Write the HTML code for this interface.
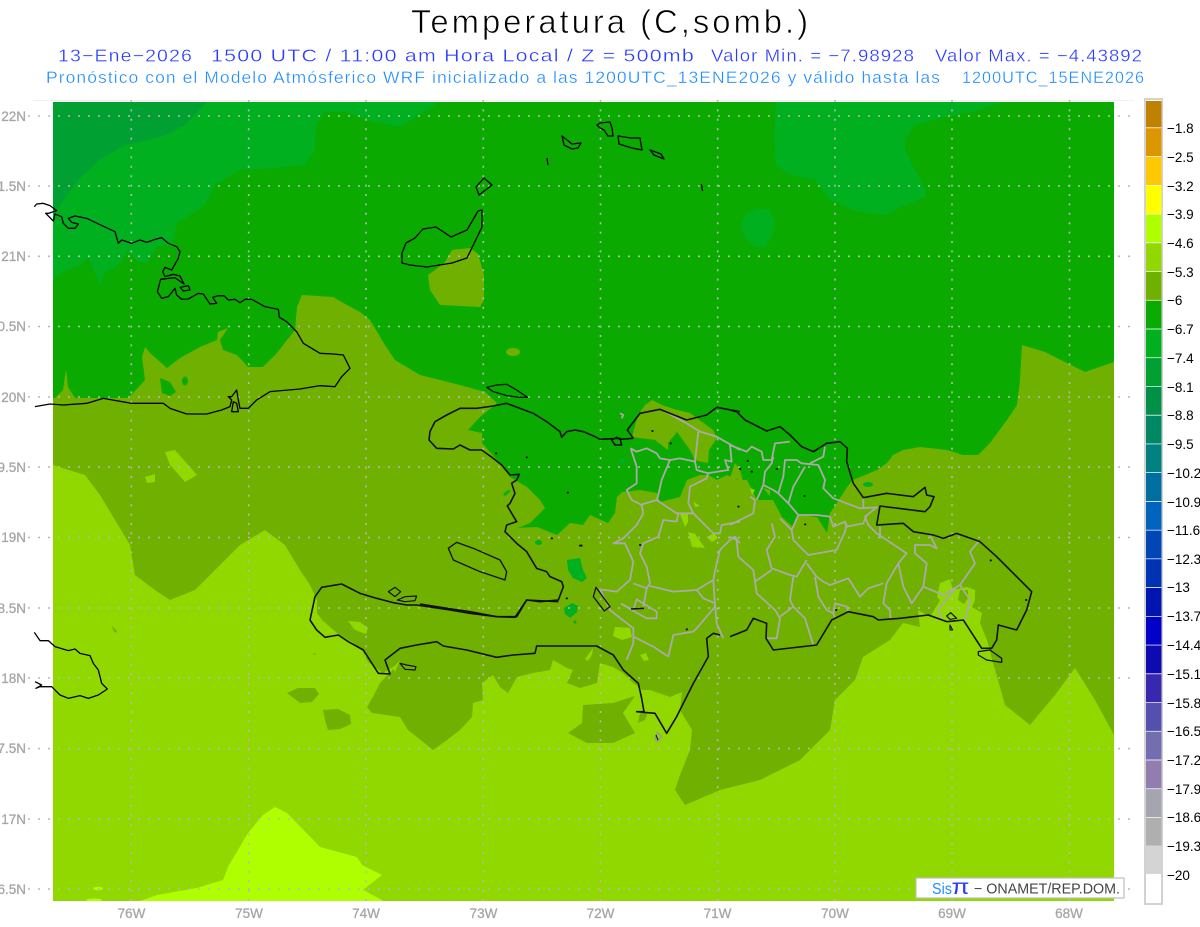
<!DOCTYPE html>
<html>
<head>
<meta charset="utf-8">
<title>Temperatura (C,somb.)</title>
<style>
html,body{margin:0;padding:0;background:#fff;width:1200px;height:927px;overflow:hidden}
svg{display:block}
svg path{vector-effect:non-scaling-stroke}
text{font-family:"Liberation Sans",sans-serif}
.b{fill:none;stroke:#000;stroke-width:1.3;stroke-linejoin:round}
.b2{fill:none;stroke:#111;stroke-width:1.6;stroke-linejoin:round}
.g{fill:none;stroke:#aaa;stroke-width:1.8;stroke-linejoin:round}
.ax{fill:#a6a6a6;font-size:13.5px;stroke:#a6a6a6;stroke-width:.3}
.lg{fill:#000;font-size:13.5px}
</style>
</head>
<body>
<svg width="1200" height="927" viewBox="0 0 1200 927" xmlns="http://www.w3.org/2000/svg">
<defs><clipPath id="m"><rect x="53" y="102" width="1061" height="799"/></clipPath></defs>
<rect width="1200" height="927" fill="#fff"/>

<text x="411" y="33" font-size="33" letter-spacing="3" textLength="400" lengthAdjust="spacingAndGlyphs" fill="#000" stroke="#fff" stroke-width=".7">Temperatura (C,somb.)</text>

<g font-size="17.5" fill="#2a3cff" stroke="#fff" stroke-width=".3" letter-spacing="1">
<text x="58" y="61.5" textLength="135" lengthAdjust="spacingAndGlyphs">13−Ene−2026</text>
<text x="211" y="61.5" textLength="484" lengthAdjust="spacingAndGlyphs">1500 UTC / 11:00 am Hora Local / Z = 500mb</text>
<text x="711" y="61.5" textLength="204" lengthAdjust="spacingAndGlyphs">Valor Min. = −7.98928</text>
<text x="935" y="61.5" textLength="208" lengthAdjust="spacingAndGlyphs">Valor Max. = −4.43892</text>
</g>
<g font-size="16.5" fill="#1c8cff" stroke="#fff" stroke-width=".3" letter-spacing="1">
<text x="46" y="83" textLength="895" lengthAdjust="spacingAndGlyphs">Pronóstico con el Modelo Atmósferico WRF inicializado a las 1200UTC_13ENE2026 y válido hasta las</text>
<text x="962" y="83" textLength="183" lengthAdjust="spacingAndGlyphs">1200UTC_15ENE2026</text>
</g>

<line x1="33" y1="100.5" x2="1134" y2="100.5" stroke="#f0f0f0"/>

<g clip-path="url(#m)">
<rect x="53" y="102" width="1061" height="799" fill="#0aaa00"/>
<!-- -7.4 west -->
<path fill="#00b01e" d="M53 102H439L420 115 400 127 375 122 345 112 325 112 316 125 315 150 305 165 275 168 240 170 215 185 205 205 190 215 178 222 173 240 172 247 167 245 157 247 147 263 138 262 128 252 120 263 112 270 105 272 100 285 95 273 88 258 80 265 67 270 55 278 53 280Z"/>
<!-- darkest -->
<path fill="#00a032" d="M53 102H207L185 125 170 133 150 140 125 145 100 160 78 180 60 205 53 218Z"/>
<!-- -7.4 east -->
<path fill="#00b01e" d="M776 102H1003L980 110 940 118 915 125 905 140 905 150 915 170 926 190 925 197 905 205 885 215 860 212 830 200 815 180 790 175 776 165 774 140 775 115Z"/>
<path fill="#00b01e" d="M741 225 747 213 757 208 770 211 775 222 772 236 765 247 755 247 745 238Z"/>
<!-- olive main -->
<path fill="#70b000" d="M53 398L55 398 63 390 66 369 68 387 75 398 128 398 138 388 145 380 142 357 145 347 150 353 167 368 180 358 200 347 217 340 218 332 228 328 220 340 223 350 237 355 248 367 263 367 277 353 287 340 295 330 297 307 302 295 333 297 347 305 360 312 370 320 385 345 395 360 420 375 460 385 485 392 497 403 480 417 468 430 482 433 482 443 497 460 510 477 527 487 540 500 545 508 530 523 518 528 537 527 557 535 570 523 583 525 590 515 608 523 615 513 617 497 622 492 640 490 657 493 660 502 680 497 687 480 700 475 708 475 717 480 727 475 737 480 747 480 757 500 773 500 782 517 793 527 798 515 817 517 827 533 830 513 837 503 847 487 853 480 877 470 887 463 893 455 903 450 920 447 947 450 963 455 978 455 990 443 1007 420 1017 405 1020 380 1022 345 1045 352 1085 372 1114 362V901H53Z"/>
<!-- olive on green -->
<path fill="#70b000" d="M445 262 452 250 470 248 478 254 484 275 484 300 480 307 440 305 430 290 428 275 435 270Z"/>
<ellipse cx="513" cy="352" rx="7" ry="4" fill="#70b000"/>
<path fill="#70b000" d="M632 437 638 415 645 405 652 400 662 405 677 410 690 413 713 430 717 438 709 450 708 463 702 462 695 460 690 450 677 432 668 443 668 450 655 440 640 438Z"/>
<path fill="#70b000" d="M735 463 740 470 743 481 730 478Z"/>
<path fill="#70b000" d="M763 488 770 490 770 496Z"/>
<!-- green blobs in olive -->
<g fill="#0aaa00">
<path d="M160 378 170 382 176 392 170 396 162 393Z"/>
<ellipse cx="185" cy="381" rx="3" ry="4.5"/>
<path d="M123 378 126 380 124 382Z"/>
</g>
<g fill="#00b01e">
<path d="M567 560 580 558 583 570 587 578 582 582 573 578 568 570Z"/>
<path d="M564 608 572 603 578 606 577 612 570 618 565 614Z"/>
<circle cx="575" cy="622" r="1.5"/>
<ellipse cx="538.5" cy="542.5" rx="3.5" ry="2.5"/>
<path d="M503 494 508 490 511 491 505 496Z"/>
<ellipse cx="622" cy="461" rx="3" ry="3"/>
<ellipse cx="868" cy="484.5" rx="5" ry="2.5"/>
</g>
<!-- -5.3 main -->
<path fill="#90d800" d="M53 465L85 475 100 495 115 520 130 545 135 575 155 590 170 600 195 590 215 570 240 545 265 530 285 545 300 570 310 585 317 600 317 613 322 620 337 633 352 642 362 650 368 662 383 673 393 667 400 662 380 683 373 697 367 707 372 713 400 717 408 730 427 745 433 750 447 740 460 730 472 717 473 703 483 700 482 683 493 675 500 687 508 693 517 677 533 673 550 670 553 660 567 668 573 670 567 683 580 688 597 683 600 663 613 667 623 673 633 683 643 690 650 690 670 697 682 692 680 710 692 730 690 750 680 775 675 790 685 805 720 790 760 780 800 760 830 730 835 700 855 680 863 657 890 640 903 623 920 627 918 610 930 617 940 600 937 597 940 583 950 579 953 590 967 587 975 590 975 600 972 607 982 613 980 623 987 640 993 663 998 680 1005 705 1030 725 1055 695 1075 668 1095 700 1114 735V901H53Z"/>
<!-- olive blobs inside -->
<g fill="#70b000">
<path d="M287 693 298 688 315 688 319 694 312 702 300 703Z"/>
<path d="M323 710 338 709 350 715 351 724 340 729 328 730 325 720Z"/>
<path d="M583 705 613 703 635 696 623 713 635 733 613 743 587 743 568 733 582 723Z"/>
<path d="M640 713 648 712 645 720 638 723Z"/>
<path d="M112 626 117 631 116 633 113 630Z"/>
<path d="M312 654 316 653 315 655Z"/>
<path d="M960 590 968 590 968 598 964 604 958 600Z"/>
</g>
<!-- -5.3 patches -->
<g fill="#90d800">
<path d="M165 452 175 450 197 475 185 482 170 465Z"/>
<path d="M145 477 155 474 155 482 147 483Z"/>
<path d="M680 514 688 513 688 522 685 527Z"/>
<path d="M688 532 695 534 705 548 692 547Z"/>
<path d="M707 537 714 533 718 538 712 542Z"/>
<path d="M694 502 700 506 695 507Z"/>
<path d="M615 627 630 628 632 637 622 640 613 636Z"/>
<path d="M585 659 593 648 592 655 588 661Z"/>
<path d="M640 655 646 653 649 660 644 661Z"/>
<path d="M348 621 360 622 368 628 366 634 355 630Z"/>
<path d="M393 668 400 660 395 672Z"/>
<path d="M750 488 755 490 752 495Z"/>
</g>
<!-- -4.6 -->
<path fill="#b0ff00" d="M137 902 157 895 197 888 223 880 228 867 248 833 263 815 275 807 287 813 320 847 357 857 362 865 382 875 363 890 382 900 382 902Z"/>
<ellipse cx="98" cy="888.5" rx="5" ry="1.8" fill="#b0ff00"/>
<ellipse cx="94" cy="900" rx="8" ry="1.5" fill="#b0ff00"/>
</g>

<!-- grid -->
<g fill="none" stroke="#b8b8b8" stroke-width="1.6">
<path stroke-dasharray="2 8" d="M28 116H1134M28 186H1134M28 256.3H1134M28 326.5H1134M28 397H1134M28 467H1134M28 537.5H1134M28 608H1134M28 678H1134M28 748.5H1134M28 819H1134M28 889H1134"/>
<path stroke-dasharray="2 7.4" d="M131.3 100V905M248.7 100V905M366 100V905M483.3 100V905M600.5 100V905M717.7 100V905M835 100V905M952 100V905M1069.5 100V905"/>
</g>

<!-- axis labels -->
<g class="ax" text-anchor="end">
<text x="26" y="121">22N</text><text x="26" y="191">1.5N</text><text x="26" y="261">21N</text><text x="26" y="331">0.5N</text><text x="26" y="402">20N</text><text x="26" y="472">9.5N</text><text x="26" y="542">19N</text><text x="26" y="613">8.5N</text><text x="26" y="683">18N</text><text x="26" y="753">7.5N</text><text x="26" y="824">17N</text><text x="26" y="894">6.5N</text>
</g>
<g class="ax" text-anchor="middle">
<text x="131.5" y="918">76W</text><text x="249" y="918">75W</text><text x="366" y="918">74W</text><text x="483.5" y="918">73W</text><text x="600.5" y="918">72W</text><text x="717.5" y="918">71W</text><text x="835" y="918">70W</text><text x="952" y="918">69W</text><text x="1069" y="918">68W</text>
</g>

<!-- Bahamas / Turks -->
<g class="b">
<path d="M476 187 484 178 492 185 479 195Z"/>
<path d="M482 210 478 211 474 218 467 230 451 237 436 227 423 229 415 238 406 243 402 253 402 263 410 265 427 267 452 263 467 258 482 227Z"/>
<path d="M562 136 564 145 572 149 578 148 581 143 572 144Z"/>
<path d="M547 158 548 165"/>
<path d="M600 123 610 122 612 128 613 136 608 136 604 130 600 128 597 125Z"/>
<path d="M618 136 631 138 640 138 642 150 632 148 619 144Z"/>
<path d="M650 150 661 154 664 159 654 155Z"/>
<path d="M701.4 184 702.5 191"/>
</g>

<!-- Cuba -->
<g transform="translate(0 190) scale(.33333)" class="b">
<path d="M103 50L110 42 130 40 150 47 170 62 145 70 137 70 160 93 165 72 185 80 190 100 205 115 225 115 235 102 215 97 205 85 225 78 260 85 285 97 345 125 355 160 365 150 395 160 420 150 440 157 465 148 485 143 505 160 530 170 540 185 535 205 515 240 495 232 488 245 495 260 520 253 540 258 552 282 525 263 482 268 472 305 485 325 505 320 525 295 530 315 545 328 565 327 595 310 610 312 630 342 650 340 638 322 655 317 672 317 685 330 705 328 720 338 735 328 755 328 795 350 835 358 838 382 860 395 890 425 910 460 960 490 1000 492 1030 495 1050 535 1025 560 1005 590 960 587 900 597 810 605 770 630 745 655 720 655 715 630 710 600 695 620 685 620 695 630 690 650 665 660 620 672 560 672 510 655 490 640 395 640 310 625 260 640 190 645 150 642 105 650"/>
<path d="M540 292 565 287 570 300 550 303Z"/>
<path d="M695 665 715 665 710 640 700 635Z"/>
</g>

<!-- Jamaica -->
<g transform="translate(0 620) scale(.33333)" class="b">
<path d="M103 37L120 62 145 62 165 80 205 92 225 87 240 100 270 107 280 130 295 150 305 190 322 207 295 225 265 235 240 227 205 235 180 225 155 200 120 200 108 205 125 195 105 185"/>
</g>

<!-- borders Z5 -->
<g transform="translate(420 380) scale(.33333)" class="g">
<path d="M632 205 650 215 680 205 710 220 720 235 750 240 780 235 825 245 830 270 865 280 860 295 810 320 805 370 820 400 850 430 880 460 900 460 905 435 960 425"/>
<path d="M835 155 825 245"/>
<path d="M730 92 800 130 840 155 890 170 960 210"/>
<path d="M930 195 935 245 915 240 925 270 860 280"/>
<path d="M632 205 650 260 650 310 620 330 635 360 665 375 670 400 650 435 610 475 580 490 615 490 640 545 630 600 590 635 540 628 570 690 640 745 640 790 620 840"/>
<path d="M750 240 725 300 715 345 710 360 660 375"/>
<path d="M710 360 770 400 820 400"/>
<path d="M775 400 770 425 730 420 715 470 670 490 660 520 680 560 690 610 680 625 640 610"/>
<path d="M680 625 670 680"/>
<path d="M690 618 760 635 830 630 880 600 890 550 900 510 930 480 945 470 960 490"/>
<path d="M830 630 850 655 885 670 890 730 910 775"/>
<path d="M885 680 830 745 820 755 760 765 745 830"/>
<path d="M640 770 700 800 745 830"/>
<path d="M880 600 885 680"/>
<path d="M605 672 640 690 650 658 710 695 710 715 680 715 635 690Z"/>
<path d="M600 100 610 105 605 115"/>
</g>
<!-- borders Z6 -->
<g transform="translate(730 400) scale(.33333)" class="g">
<path d="M0 135 50 155 65 140 95 155 100 180 125 180 135 130 180 125"/>
<path d="M130 170 125 190 105 215 100 255 130 270 145 280 160 230 165 180 200 180 215 190 265 195 285 240 280 265 310 295 390 325 440 322 405 350 415 375 440 400 530 460 505 490 470 550 460 610 480 630 482 660"/>
<path d="M60 290 75 300 70 340 0 375"/>
<path d="M100 255 80 300"/>
<path d="M240 190 280 170 285 140"/>
<path d="M225 200 190 260 175 310 205 345 260 345 300 350 310 380 345 365 350 380 400 370 410 345"/>
<path d="M175 310 145 280"/>
<path d="M205 345 185 390 150 355"/>
<path d="M125 370 135 410 110 450 125 505 180 525 200 530 230 480"/>
<path d="M185 390 190 420 235 465 320 450 345 395 350 370"/>
<path d="M230 490 260 530 280 545 300 555 355 535 390 590 415 565 460 550"/>
<path d="M0 410 20 420 25 470 70 510 75 545 125 510"/>
<path d="M75 545 80 580 135 630 150 655 140 715 110 715"/>
<path d="M190 530 180 600 190 620 150 650"/>
<path d="M190 620 225 655 250 735"/>
<path d="M255 530 265 590 290 630 310 640 315 610 350 620 355 635"/>
<path d="M505 490 520 560 545 610 580 560 590 490 555 460 555 435 600 435 620 445 600 405"/>
<path d="M580 560 640 585 690 555 735 490 720 455 745 425"/>
<path d="M690 555 720 600 705 660"/>
<path d="M680 560 625 630 635 660"/>
<path d="M450 380 450 415"/>
<path d="M310 640 315 655"/>
<path d="M400 293 400 325"/>
<path d="M660 680 665 690"/>
</g>

<!-- Hispaniola coast -->
<g transform="translate(420 380) scale(.33333)" class="b2">
<path d="M200 22 230 15 260 13 290 30 322 52 300 52 260 47 220 35Z" style="stroke-width:1.3"/>
<path d="M85 505 110 487 160 505 240 540 260 575 255 600 180 575 100 540Z" style="stroke-width:1.3"/>
<path d="M640 175 600 178 590 172 575 180 585 195 605 195 600 175 540 178 525 170 490 155 465 150 440 155 425 172 420 155 380 125 340 100 300 85 260 70 220 78 170 85 120 85 80 105 45 125 30 155 27 180 50 205 100 207 120 195 150 210 185 210 220 235 245 255 270 285 298 283 290 300 275 310 285 340 270 370 262 378 290 425 260 435 255 455 290 490 320 515 350 565 380 575 390 590 425 605 430 620 415 660 360 665 320 660 300 690 285 712 230 710 150 695 100 688 50 680 0 672"/>
<path d="M640 175 622 150 660 100 720 88 800 120 860 105 890 82 960 95"/>
<path d="M528 622 570 680 553 693 520 650Z" style="stroke-width:1.3"/>
<path d="M633 687 672 685" style="stroke-width:1.5"/>
<g style="stroke-width:2;stroke-linecap:round"><path d="M228 220h1M320 232h1M443 338h1M395 475h1M480 497h5M697 153h1M752 190h1M440 655h1M660 495h1M800 748h1"/></g>
</g>
<g transform="translate(280 570) scale(.33333)" class="b2">
<path d="M835 95 740 90 710 140 650 140 570 130 510 120 410 105 380 105 340 98 290 85 240 70 185 42 125 52 105 80 90 150 110 180 135 202 175 195 205 215 250 240 295 310 330 312 315 270 360 235 410 225 470 215 490 228 560 240 650 262 700 255 765 250 770 228 850 228 950 228 1000 255 1030 300 1075 340 1085 385 1092 425 1070 425 1125 430 1160 490 1190 440 1240 340 1285 260 1280 205 1300 190 1320 195"/>
<path d="M325 65 345 52 362 65 345 80Z" style="stroke-width:1.2"/>
<path d="M352 90 375 80 410 78 405 92 375 95Z" style="stroke-width:1.2"/>
<path d="M360 280 380 285 408 290 405 300 375 298Z" style="stroke-width:1.2"/>
<path d="M1125 505 1132 488 1145 500 1132 515Z" style="stroke:#999;stroke-width:1.5"/>
<path d="M1128 495 1134 510" style="stroke-width:1.1"/>
</g>
<g transform="translate(730 400) scale(.33333)" class="b2">
<path d="M0 30 20 35 45 60 110 93 150 80 180 105 215 140 250 155 290 130 330 125 352 145 350 185 370 250 400 293 470 280 550 290 585 262 590 285 612 290 600 320 585 335 450 318 440 375 520 370 550 395 610 405 640 415 680 400 750 425 800 470 880 550 905 575 890 630 860 690 805 675 800 720 785 745 755 745 700 660 650 665 595 645 510 655 445 660 430 650 355 635 305 660 260 735 130 750 108 715 110 670 70 655 50 690 0 710"/>
<path d="M745 755 780 750 815 775 815 787 770 780 745 765Z" style="stroke-width:1.3"/>
<path d="M650 648 662 638 680 655 660 658Z" style="stroke-width:1.2"/>
<path d="M660 675 668 690 660 690Z" style="stroke-width:1.1"/>
<g style="stroke-width:2;stroke-linecap:round"><path d="M53 183h1M30 207h1M65 215h1M25 320h1M253 153h1M223 288h1M225 373h1M782 481h1M888 600h1M318 630h1M140 207h1"/></g>
</g>

<!-- watermark -->
<rect x="916" y="878" width="208" height="20" fill="#fff" stroke="#bdbdbd" stroke-width="1.2"/>
<text x="932" y="894" font-size="15.5" textLength="20" lengthAdjust="spacingAndGlyphs" fill="#1e90ff">Sis</text>
<text x="951.5" y="894" font-size="21" textLength="18" lengthAdjust="spacingAndGlyphs" fill="#2a3cff">π</text>
<text x="974" y="893.5" font-size="14.5" fill="#444" textLength="146" lengthAdjust="spacingAndGlyphs" xml:space="preserve">− ONAMET/REP.DOM.</text>

<!-- legend -->
<rect x="1145" y="99" width="17" height="805" fill="#fff" stroke="#d2d2d2" stroke-width="2"/>
<g>
<rect x="1146" y="101" width="15.5" height="26.4" fill="#c08000"/>
<rect x="1146" y="128.2" width="15.5" height="28" fill="#dc9600"/>
<rect x="1146" y="157" width="15.5" height="28" fill="#ffc800"/>
<rect x="1146" y="185.7" width="15.5" height="28" fill="#ffff00"/>
<rect x="1146" y="214.4" width="15.5" height="28" fill="#b0ff00"/>
<rect x="1146" y="243.2" width="15.5" height="28" fill="#90d800"/>
<rect x="1146" y="271.9" width="15.5" height="28" fill="#70b000"/>
<rect x="1146" y="300.6" width="15.5" height="28" fill="#0aaa00"/>
<rect x="1146" y="329.4" width="15.5" height="28" fill="#00b01e"/>
<rect x="1146" y="358.1" width="15.5" height="28" fill="#00a032"/>
<rect x="1146" y="386.8" width="15.5" height="28" fill="#009146"/>
<rect x="1146" y="415.6" width="15.5" height="28" fill="#008764"/>
<rect x="1146" y="444.3" width="15.5" height="28" fill="#008080"/>
<rect x="1146" y="473" width="15.5" height="28" fill="#006ea0"/>
<rect x="1146" y="501.8" width="15.5" height="28" fill="#0064be"/>
<rect x="1146" y="530.5" width="15.5" height="28" fill="#0046b4"/>
<rect x="1146" y="559.2" width="15.5" height="28" fill="#0032b4"/>
<rect x="1146" y="588" width="15.5" height="28" fill="#0014af"/>
<rect x="1146" y="616.7" width="15.5" height="28" fill="#0000c8"/>
<rect x="1146" y="645.4" width="15.5" height="28" fill="#0f0aaf"/>
<rect x="1146" y="674.2" width="15.5" height="28" fill="#3728af"/>
<rect x="1146" y="702.9" width="15.5" height="28" fill="#5550af"/>
<rect x="1146" y="731.6" width="15.5" height="28" fill="#736eaf"/>
<rect x="1146" y="760.4" width="15.5" height="28" fill="#917daf"/>
<rect x="1146" y="789.1" width="15.5" height="28" fill="#a5a5af"/>
<rect x="1146" y="817.8" width="15.5" height="28" fill="#afafaf"/>
<rect x="1146" y="845.5" width="15.5" height="28.4" fill="#d4d4d4"/>
</g>
<g class="lg">
<text x="1167" y="133">−1.8</text>
<text x="1167" y="162">−2.5</text>
<text x="1167" y="191">−3.2</text>
<text x="1167" y="219">−3.9</text>
<text x="1167" y="248">−4.6</text>
<text x="1167" y="277">−5.3</text>
<text x="1167" y="305">−6</text>
<text x="1167" y="334">−6.7</text>
<text x="1167" y="363">−7.4</text>
<text x="1167" y="392">−8.1</text>
<text x="1167" y="420">−8.8</text>
<text x="1167" y="449">−9.5</text>
<text x="1167" y="478">−10.2</text>
<text x="1167" y="507">−10.9</text>
<text x="1167" y="535">−11.6</text>
<text x="1167" y="564">−12.3</text>
<text x="1167" y="592">−13</text>
<text x="1167" y="621">−13.7</text>
<text x="1167" y="650">−14.4</text>
<text x="1167" y="679">−15.1</text>
<text x="1167" y="708">−15.8</text>
<text x="1167" y="736">−16.5</text>
<text x="1167" y="765">−17.2</text>
<text x="1167" y="794">−17.9</text>
<text x="1167" y="822">−18.6</text>
<text x="1167" y="851">−19.3</text>
<text x="1167" y="880">−20</text>
</g>
</svg>
</body>
</html>
